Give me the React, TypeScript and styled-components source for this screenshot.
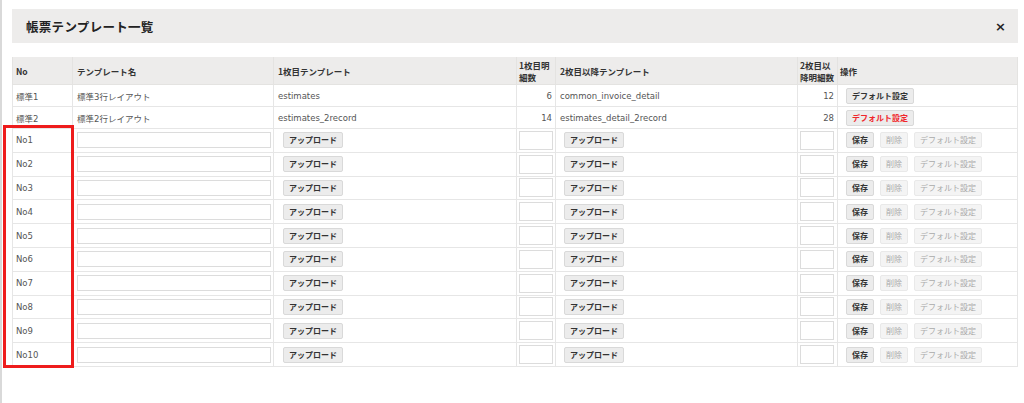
import styled, { createGlobalStyle } from 'styled-components';

const GlobalStyle = createGlobalStyle`
  html, body {
    margin: 0;
    padding: 0;
    background: #fff;
  }
  body {
    font-family: 'DejaVu Sans', 'Noto Sans CJK JP', sans-serif;
    color: #555;
    border-left: 2px solid #d9d9d9;
    min-height: 403px;
    box-sizing: border-box;
  }
`;

const Page = styled.div`
  padding: 9px 4px 0 10px;
`;

const TitleBar = styled.div`
  display: flex;
  align-items: center;
  justify-content: space-between;
  height: 34px;
  width: 1006px;
  box-sizing: border-box;
  padding: 0 14px;
  background: #edeceb;
`;

const Title = styled.h1`
  margin: 0;
  font-family: 'Noto Sans CJK JP', sans-serif;
  font-size: 12.5px;
  font-weight: 700;
  color: #222;
  letter-spacing: 0.3px;
`;

const CloseButton = styled.button`
  border: none;
  background: transparent;
  padding: 0;
  margin-right: -2px;
  font-family: 'DejaVu Sans', sans-serif;
  font-size: 13px;
  font-weight: 700;
  color: #222;
  cursor: pointer;
`;

const TableWrap = styled.div`
  position: relative;
  margin-top: 14px;
  width: 1006px;
`;

const Table = styled.table`
  width: 1006px;
  table-layout: fixed;
  border-collapse: collapse;
  font-size: 8.5px;
`;

const HeadCell = styled.th<{ $pad?: number }>`
  height: 27px;
  padding: 0 ${p => p.$pad ?? 4}px;
  background: #edeceb;
  border: 1px solid #e4e3e1;
  border-top: none;
  text-align: left;
  font-weight: 700;
  color: #333;
  line-height: 12px;
  font-family: 'Noto Sans CJK JP', sans-serif;
`;

const Cell = styled.td<{ $pad?: number; $right?: boolean }>`
  height: 21px;
  padding: 0 ${p => p.$pad ?? 4}px;
  border: 1px solid #e6e6e6;
  white-space: nowrap;
  text-align: ${p => (p.$right ? 'right' : 'left')};
  vertical-align: middle;
  color: #555;
`;

const EditRow = styled.tr`
  td {
    height: 22.8px;
  }
`;

const TextInput = styled.input`
  display: block;
  width: 194px;
  height: 16px;
  box-sizing: border-box;
  border: 1px solid #dcdcdc;
  background: #fff;
  padding: 0 3px;
  font-size: 8.5px;
`;

const NumInput = styled.input`
  display: block;
  width: 34px;
  height: 19px;
  box-sizing: border-box;
  border: 1px solid #dcdcdc;
  background: #fff;
  padding: 0 3px;
  font-size: 8.5px;
`;

const Actions = styled.div`
  display: flex;
  gap: 6px;
`;

const Button = styled.button<{ $danger?: boolean }>`
  height: 16px;
  min-width: 28px;
  padding: 0 5px;
  border: 1px solid #d9d9d9;
  border-radius: 2px;
  background: #ececec;
  font-family: 'Noto Sans CJK JP', sans-serif;
  font-size: 8px;
  font-weight: 700;
  line-height: 14px;
  color: ${p => (p.$danger ? '#f0262b' : '#333')};
  cursor: pointer;
  white-space: nowrap;

  &:disabled {
    background: #f4f4f4;
    border-color: #e9e9e9;
    color: #aaa;
    font-weight: 400;
    cursor: default;
  }
`;

const Highlight = styled.div`
  position: absolute;
  left: -9px;
  top: 68px;
  width: 71px;
  height: 243px;
  box-sizing: border-box;
  border: 3px solid #ee1c1c;
  pointer-events: none;
`;

const presets = [
  { no: '標準1', name: '標準3行レイアウト', first: 'estimates', firstCount: 6, second: 'common_invoice_detail', secondCount: 12, danger: false },
  { no: '標準2', name: '標準2行レイアウト', first: 'estimates_2record', firstCount: 14, second: 'estimates_detail_2record', secondCount: 28, danger: true },
];

const slots = Array.from({ length: 10 }, (_, i) => `No${i + 1}`);

export default function App() {
  return (
    <>
      <GlobalStyle />
      <Page>
        <TitleBar>
          <Title>帳票テンプレート一覧</Title>
          <CloseButton aria-label="close">×</CloseButton>
        </TitleBar>

        <TableWrap>
          <Table>
            <colgroup>
              <col style={{ width: 60 }} />
              <col style={{ width: 201 }} />
              <col style={{ width: 243 }} />
              <col style={{ width: 39 }} />
              <col style={{ width: 242 }} />
              <col style={{ width: 40 }} />
              <col />
            </colgroup>
            <thead>
              <tr>
                <HeadCell $pad={3}>No</HeadCell>
                <HeadCell>テンプレート名</HeadCell>
                <HeadCell>1枚目テンプレート</HeadCell>
                <HeadCell $pad={2}>1枚目明<br />細数</HeadCell>
                <HeadCell>2枚目以降テンプレート</HeadCell>
                <HeadCell $pad={2}>2枚目以<br />降明細数</HeadCell>
                <HeadCell $pad={2}>操作</HeadCell>
              </tr>
            </thead>
            <tbody>
              {presets.map(p => (
                <tr key={p.no}>
                  <Cell $pad={3}>{p.no}</Cell>
                  <Cell>{p.name}</Cell>
                  <Cell>{p.first}</Cell>
                  <Cell $right $pad={3}>{p.firstCount}</Cell>
                  <Cell>{p.second}</Cell>
                  <Cell $right $pad={3}>{p.secondCount}</Cell>
                  <Cell $pad={8}>
                    <Button $danger={p.danger}>デフォルト設定</Button>
                  </Cell>
                </tr>
              ))}
              {slots.map(no => (
                <EditRow key={no}>
                  <Cell $pad={3}>{no}</Cell>
                  <Cell>
                    <TextInput type="text" />
                  </Cell>
                  <Cell $pad={9}>
                    <Button>アップロード</Button>
                  </Cell>
                  <Cell $pad={2}>
                    <NumInput type="text" />
                  </Cell>
                  <Cell $pad={8}>
                    <Button>アップロード</Button>
                  </Cell>
                  <Cell $pad={2}>
                    <NumInput type="text" />
                  </Cell>
                  <Cell $pad={8}>
                    <Actions>
                      <Button>保存</Button>
                      <Button disabled>削除</Button>
                      <Button disabled>デフォルト設定</Button>
                    </Actions>
                  </Cell>
                </EditRow>
              ))}
            </tbody>
          </Table>
          <Highlight />
        </TableWrap>
      </Page>
    </>
  );
}
